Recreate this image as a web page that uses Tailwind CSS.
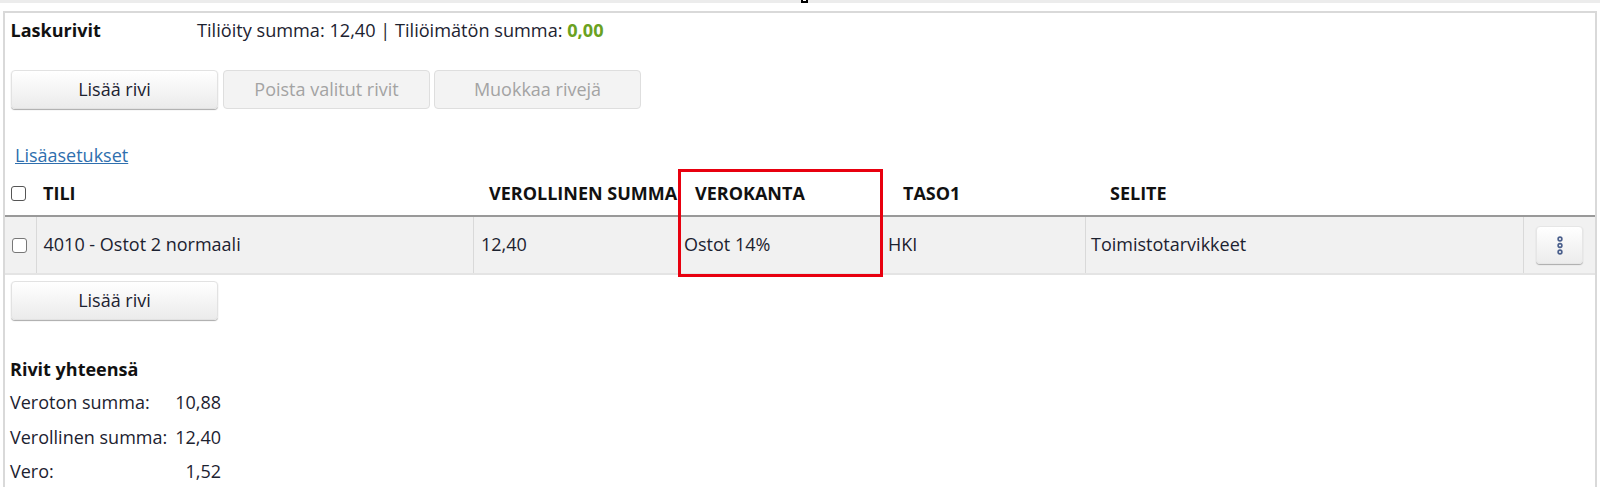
<!DOCTYPE html>
<html lang="fi">
<head>
  <meta charset="UTF-8">
  <title>Laskurivit</title>
  <script src="https://cdn.jsdelivr.net/npm/@tailwindcss/browser@4"></script>
</head>
<body class="bg-white h-[487px] overflow-hidden font-['Open_Sans',sans-serif] text-[18px] text-[#1c2230] relative">
  <!-- top strip -->
  <div class="h-[3px] bg-[#ececec]"></div>
  <div class="absolute top-0 left-[801px] w-[7px] h-[3px] border-x-2 border-b-2 border-black bg-white"></div>

  <div class="mt-[8px] mx-[3px] w-[1594px] border-l-2 border-r-2 border-t-2 border-[#d9d9d9] h-[480px]">
    <!-- header -->
    <div class="flex items-center h-[35px] pl-[5.5px]">
      <div class="w-[186.5px] font-bold text-[#111]">Laskurivit</div>
      <div class="text-[18.15px]">Tiliöity summa: 12,40 | Tiliöimätön summa: <span class="font-bold text-[#6aa121]">0,00</span></div>
    </div>

    <!-- buttons -->
    <div class="flex gap-[5px] mt-[22px] pl-[6px]">
      <button class="w-[207px] h-[39px] rounded-[4px] border border-[#e2e2e2] bg-gradient-to-b from-white to-[#ebebeb] shadow-[0_1px_1px_#aaa]">Lisää rivi</button>
      <button class="w-[207px] h-[39px] rounded-[4px] border border-[#dedede] bg-[#f3f3f3] text-[#a3a3a3]">Poista valitut rivit</button>
      <button class="w-[207px] h-[39px] -ml-px rounded-[4px] border border-[#dedede] bg-[#f3f3f3] text-[#a3a3a3]">Muokkaa rivejä</button>
    </div>

    <div class="mt-[34px] pl-[10px] h-[24px] leading-[24px]"><a href="#" class="text-[#2f6fae] underline">Lisäasetukset</a></div>

    <!-- table head -->
    <div class="flex items-center h-[44px] mt-[6px] pb-[1px] font-bold text-[#111] border-b-2 border-[#999]">
      <div class="w-[38px] pl-[6px] flex items-center"><span class="block w-[15px] h-[15px] border border-[#555] rounded-[3px] bg-white"></span></div>
      <div class="w-[446px]">TILI</div>
      <div class="w-[206px] whitespace-nowrap">VEROLLINEN SUMMA</div>
      <div class="w-[208px]">VEROKANTA</div>
      <div class="w-[207px]">TASO1</div>
      <div>SELITE</div>
    </div>

    <!-- row -->
    <div class="flex items-stretch h-[58px] bg-[#f1f1f1] border-b-2 border-[#e4e4e4]">
      <div class="w-[32px] pl-[7px] flex items-center border-r border-[#d9d9d9]"><span class="block w-[15px] h-[15px] border border-[#777] rounded-[3px] bg-white"></span></div>
      <div class="w-[437px] pl-[6.5px] pb-[1px] flex items-center border-r border-[#d9d9d9]">4010 - Ostot 2 normaali</div>
      <div class="w-[205px] pl-[7px] pb-[1px] flex items-center">12,40</div>
      <div class="w-[204px] pl-[5px] pb-[1px] flex items-center border-r border-[#d9d9d9]">Ostot 14%</div>
      <div class="w-[203px] pl-[5px] pb-[1px] flex items-center border-r border-[#d9d9d9]">HKI</div>
      <div class="w-[438px] pl-[5px] pb-[1px] flex items-center border-r border-[#d9d9d9]">Toimistotarvikkeet</div>
      <div class="flex-1 flex items-center justify-center">
        <button class="w-[47px] h-[38px] rounded-[4px] border border-[#e6e6e6] bg-gradient-to-b from-white to-[#ececec] shadow-[0_1px_1px_#aaa] flex items-center justify-center">
          <svg width="6" height="19" viewBox="0 0 6 19" fill="none" stroke="#4a5f8c" stroke-width="1.6">
            <circle cx="3" cy="3" r="1.9"/><circle cx="3" cy="9.5" r="1.9"/><circle cx="3" cy="16" r="1.9"/>
          </svg>
        </button>
      </div>
    </div>

    <div class="mt-[6px] pl-[6px]">
      <button class="w-[207px] h-[39px] rounded-[4px] border border-[#e2e2e2] bg-gradient-to-b from-white to-[#ebebeb] shadow-[0_1px_1px_#aaa]">Lisää rivi</button>
    </div>

    <!-- totals -->
    <div class="mt-[37px] pl-[5px] w-[216px]">
      <div class="font-bold text-[#111] h-[24px] leading-[24px]">Rivit yhteensä</div>
      <div class="flex justify-between mt-[9px] h-[24px] leading-[24px]"><span>Veroton summa:</span><span>10,88</span></div>
      <div class="flex justify-between mt-[11px] h-[24px] leading-[24px]"><span>Verollinen summa:</span><span>12,40</span></div>
      <div class="flex justify-between mt-[10px] h-[24px] leading-[24px]"><span>Vero:</span><span>1,52</span></div>
    </div>
  </div>

  <!-- red annotation box -->
  <div class="absolute left-[678px] top-[169px] w-[205px] h-[108px] border-[3px] border-[#e8000f]"></div>
</body>
</html>
